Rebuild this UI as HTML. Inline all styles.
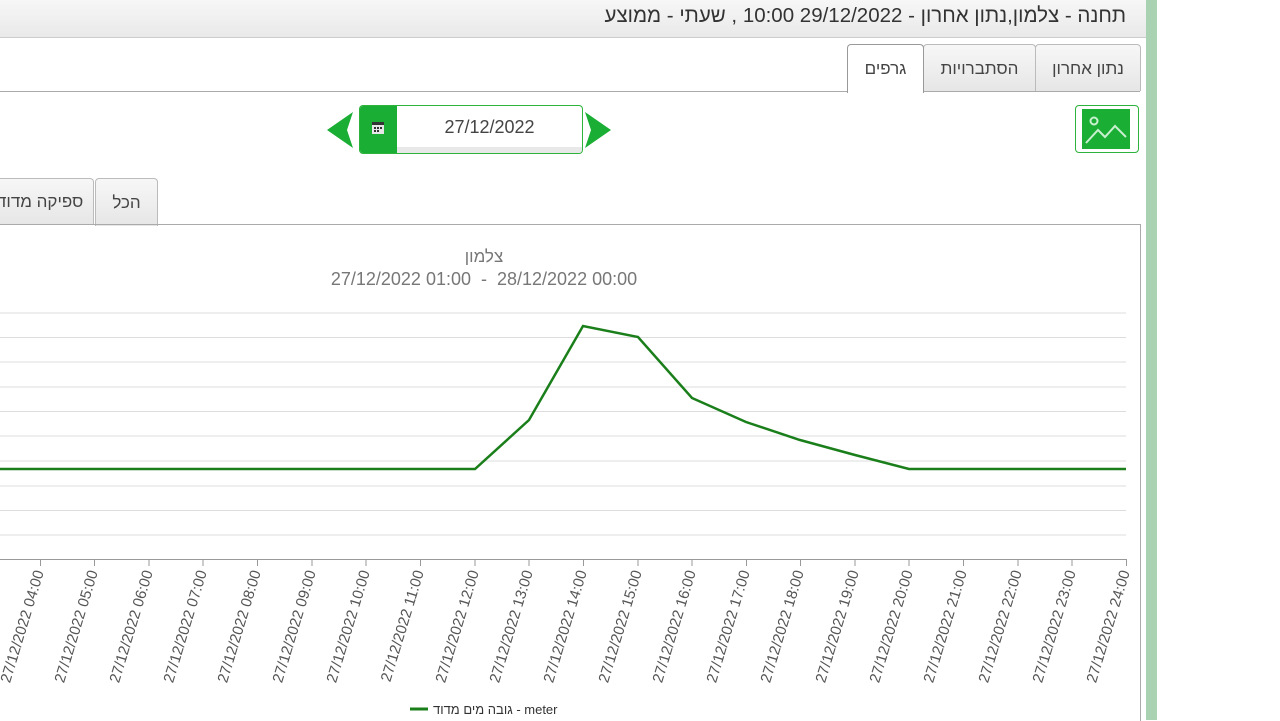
<!DOCTYPE html>
<html><head><meta charset="utf-8"><style>
body{margin:0;width:1280px;height:720px;overflow:hidden;background:#fff;font-family:"Liberation Sans",sans-serif;position:relative}
.title{position:absolute;left:0;top:0;width:1146px;height:37px;background:linear-gradient(#f7f7f7,#e9e9e9);border-bottom:1px solid #ccc;}
.title span{position:absolute;right:20px;top:4px;font-size:20.5px;color:#333;direction:rtl;white-space:nowrap}
.map{position:absolute;left:1146px;top:0;width:11px;height:720px;background:#a9d2b3}
.tab{position:absolute;top:44px;height:46px;border:1px solid #bbb;border-bottom:none;border-radius:4px 4px 0 0;background:linear-gradient(#f7f7f7,#e6e6e6);font-size:17px;color:#444;text-align:center;line-height:48px;direction:rtl}
.tabline{position:absolute;left:0;top:91px;width:1140px;height:1px;background:#aaa}
</style></head><body>
<div class="title"><span>תחנה - צלמון,נתון אחרון - <bdi dir="ltr">10:00 29/12/2022</bdi> , שעתי - ממוצע</span></div>
<div class="map"></div>
<div class="tabline"></div>
<div class="tab" style="left:1035px;width:104px">נתון אחרון</div>
<div class="tab" style="left:923px;width:111px">הסתברויות</div>
<div class="tab" style="left:847px;width:75px;background:#fff;height:48px;border-color:#999">גרפים</div>
<div style="position:absolute;left:1075px;top:105px;width:62px;height:46px;border:1px solid #2db33c;border-radius:4px;background:#fff"></div>
<svg style="position:absolute;left:1082px;top:109px" width="48" height="40"><rect width="48" height="40" fill="#1aae34"/><circle cx="12" cy="12" r="3.5" fill="none" stroke="#c9f0cf" stroke-width="2"/><path d="M4 34 L16 21 L23 28 L33 17 L44 28" fill="none" stroke="#c9f0cf" stroke-width="2"/></svg>
<svg style="position:absolute;left:325px;top:110px" width="290" height="42"><path d="M28 2 L2 20 L28 38 L22 20Z" fill="#1aae34"/><path d="M260 2 L286 20 L260 38 L266 20Z" fill="#1aae34"/></svg>
<div style="position:absolute;left:359px;top:105px;width:222px;height:47px;border:1px solid #2db33c;border-radius:4px;background:#fff;overflow:hidden">
<div style="position:absolute;left:0;top:0;width:37px;height:47px;background:#1aae34"></div>
<div style="position:absolute;left:37px;right:0;bottom:0;height:6px;background:#e8e8e8"></div>
<div style="position:absolute;left:37px;right:0;text-align:center;top:11px;font-size:18px;color:#444">27/12/2022</div>
<svg style="position:absolute;left:12px;top:14px" width="12" height="14"><rect x="0" y="2" width="12" height="12" fill="#e6e6e6"/><rect x="0" y="2" width="12" height="3" fill="#333"/><g fill="#333"><rect x="2" y="7" width="2" height="2"/><rect x="5" y="7" width="2" height="2"/><rect x="8" y="7" width="2" height="2"/><rect x="2" y="10" width="2" height="2"/><rect x="5" y="10" width="2" height="2"/></g></svg>
</div>
<div style="position:absolute;left:-20px;top:178px;width:114px;height:47px;border:1px solid #bbb;border-bottom:none;border-radius:4px 4px 0 0;background:linear-gradient(#f7f7f7,#e6e6e6);font-size:17px;color:#444;line-height:46px;text-align:left;padding-left:16px;box-sizing:border-box;direction:rtl;overflow:hidden;white-space:nowrap">ספיקה מדוד</div>
<div class="tab" style="left:95px;top:178px;width:61px;height:47px">הכל</div>
<div style="position:absolute;left:0;top:224px;width:1140px;height:496px;border-top:1px solid #aaa;border-right:1px solid #aaa"></div>
<svg style="position:absolute;left:0;top:0" width="1140" height="720" font-family="Liberation Sans, sans-serif">
<text x="484" y="262" font-size="17" fill="#777" text-anchor="middle">צלמון</text>
<text x="484" y="285" font-size="18" fill="#777" text-anchor="middle" direction="ltr" style="white-space:pre" xml:space="preserve">27/12/2022 01:00  -  28/12/2022 00:00</text>
<g stroke="#ddd" stroke-width="1">
<line x1="0" x2="1126" y1="313" y2="313"/><line x1="0" x2="1126" y1="337.5" y2="337.5"/><line x1="0" x2="1126" y1="362" y2="362"/><line x1="0" x2="1126" y1="387" y2="387"/><line x1="0" x2="1126" y1="411.5" y2="411.5"/><line x1="0" x2="1126" y1="436" y2="436"/><line x1="0" x2="1126" y1="461" y2="461"/><line x1="0" x2="1126" y1="486" y2="486"/><line x1="0" x2="1126" y1="510.5" y2="510.5"/><line x1="0" x2="1126" y1="535" y2="535"/>
</g>
<line x1="0" x2="1127" y1="559.5" y2="559.5" stroke="#999"/>
<g stroke="#999">
<line x1="40.5" x2="40.5" y1="560" y2="566"/><line x1="94.5" x2="94.5" y1="560" y2="566"/><line x1="149" x2="149" y1="560" y2="566"/><line x1="203" x2="203" y1="560" y2="566"/><line x1="257.5" x2="257.5" y1="560" y2="566"/><line x1="312" x2="312" y1="560" y2="566"/><line x1="366" x2="366" y1="560" y2="566"/><line x1="420.5" x2="420.5" y1="560" y2="566"/><line x1="475" x2="475" y1="560" y2="566"/><line x1="529" x2="529" y1="560" y2="566"/><line x1="583.5" x2="583.5" y1="560" y2="566"/><line x1="638" x2="638" y1="560" y2="566"/><line x1="692" x2="692" y1="560" y2="566"/><line x1="746.5" x2="746.5" y1="560" y2="566"/><line x1="800.5" x2="800.5" y1="560" y2="566"/><line x1="855" x2="855" y1="560" y2="566"/><line x1="909" x2="909" y1="560" y2="566"/><line x1="963.5" x2="963.5" y1="560" y2="566"/><line x1="1018" x2="1018" y1="560" y2="566"/><line x1="1072" x2="1072" y1="560" y2="566"/><line x1="1126.5" x2="1126.5" y1="560" y2="566"/>
</g>
<polyline points="0,469 475,469 529,420 583,326 638,337 692,398 746,422 800,440 855,455 909,469 1126,469" fill="none" stroke="#1a7f1a" stroke-width="2.5"/>
<g font-size="15" fill="#555" text-anchor="end">
<text transform="translate(-10,572) rotate(-73)">27/12/2022 03:00</text>
<text transform="translate(44,572) rotate(-73)">27/12/2022 04:00</text>
<text transform="translate(98,572) rotate(-73)">27/12/2022 05:00</text>
<text transform="translate(153,572) rotate(-73)">27/12/2022 06:00</text>
<text transform="translate(207,572) rotate(-73)">27/12/2022 07:00</text>
<text transform="translate(261,572) rotate(-73)">27/12/2022 08:00</text>
<text transform="translate(316,572) rotate(-73)">27/12/2022 09:00</text>
<text transform="translate(370,572) rotate(-73)">27/12/2022 10:00</text>
<text transform="translate(424,572) rotate(-73)">27/12/2022 11:00</text>
<text transform="translate(479,572) rotate(-73)">27/12/2022 12:00</text>
<text transform="translate(533,572) rotate(-73)">27/12/2022 13:00</text>
<text transform="translate(587,572) rotate(-73)">27/12/2022 14:00</text>
<text transform="translate(642,572) rotate(-73)">27/12/2022 15:00</text>
<text transform="translate(696,572) rotate(-73)">27/12/2022 16:00</text>
<text transform="translate(750,572) rotate(-73)">27/12/2022 17:00</text>
<text transform="translate(804,572) rotate(-73)">27/12/2022 18:00</text>
<text transform="translate(859,572) rotate(-73)">27/12/2022 19:00</text>
<text transform="translate(913,572) rotate(-73)">27/12/2022 20:00</text>
<text transform="translate(967,572) rotate(-73)">27/12/2022 21:00</text>
<text transform="translate(1022,572) rotate(-73)">27/12/2022 22:00</text>
<text transform="translate(1076,572) rotate(-73)">27/12/2022 23:00</text>
<text transform="translate(1130,572) rotate(-73)">27/12/2022 24:00</text>
</g>
<line x1="410" x2="428" y1="709" y2="709" stroke="#1a7f1a" stroke-width="3"/>
<text x="433" y="714" font-size="13" fill="#333">גובה מים מדוד - meter</text>
</svg>
</body></html>
